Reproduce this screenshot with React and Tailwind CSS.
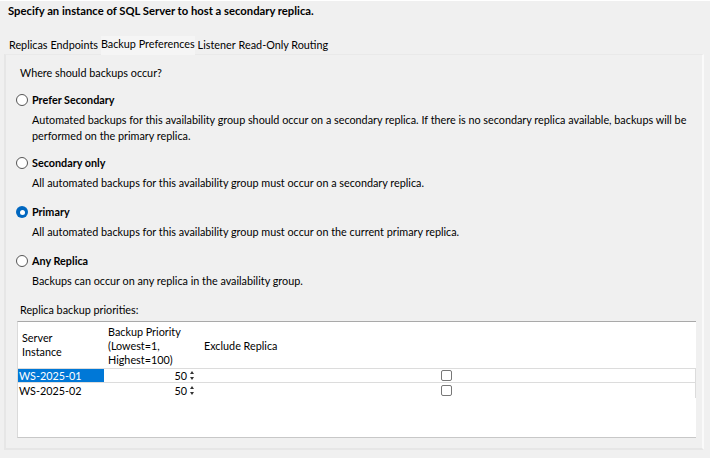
import React from 'react';

const font = "font-['Lato','Liberation_Sans',sans-serif]";

function Radio({ checked }) {
  if (checked) {
    return (
      <span className="flex h-[12px] w-[12px] shrink-0 items-center justify-center rounded-full bg-[#0067c0]">
        <span className="h-[5px] w-[5px] rounded-full bg-white" />
      </span>
    );
  }
  return <span className="h-[12px] w-[12px] shrink-0 rounded-full border border-[#555] bg-white" />;
}

function Option({ label, checked, children, className }) {
  return (
    <div className={className}>
      <div className="flex h-[16px] items-center gap-[4px] pl-[10px]">
        <Radio checked={checked} />
        <span className="font-bold">{label}</span>
      </div>
      <div className="mt-[4px] pl-[26px] leading-[16px]">{children}</div>
    </div>
  );
}

function Spinner() {
  return (
    <span className="ml-[3px] flex flex-col items-center gap-[3px]">
      <span className="h-0 w-0 border-x-[2.5px] border-b-[3px] border-x-transparent border-b-[#333]" />
      <span className="h-0 w-0 border-x-[2.5px] border-t-[3px] border-x-transparent border-t-[#333]" />
    </span>
  );
}

function Row({ name, selected, first }) {
  return (
    <div className={`flex h-[15px] items-center ${first ? 'border-y border-[#dcdcdc]' : ''}`}>
      <div className={`flex h-full w-[86px] items-center pl-[1px] ${selected ? 'bg-[#0078d7] text-white' : ''}`}>{name}</div>
      <div className="flex h-full w-[95px] items-center justify-end pr-[5px]">
        <span>50</span>
        <Spinner />
      </div>
      <div className="flex flex-1 justify-center pr-[2px]">
        <span className="h-[11px] w-[11px] rounded-[2px] border border-[#777] bg-white" />
      </div>
    </div>
  );
}

export default function App() {
  return (
    <div className={`h-[458px] w-[710px] overflow-hidden bg-[#f0f0f0] text-[10.8px] leading-[16px] text-black ${font}`}>
      <div className="border-t border-white pl-[8px] pt-[2px] text-[11.25px] font-bold">
        Specify an instance of SQL Server to host a secondary replica.
      </div>
      <div className="mt-[18px] flex h-[17px] items-end gap-[3px] pl-[9px]">
        <span className="pb-[1px]">Replicas</span>
        <span className="pb-[1px]">Endpoints</span>
        <span className="-mb-[1px] bg-[#f5f5f5] pb-[3px]">Backup Preferences</span>
        <span className="pb-[1px]">Listener</span>
        <span className="pb-[1px]">Read-Only Routing</span>
      </div>
      <div className="ml-[4px] flex h-[396px] w-[700px] flex-col border-x-2 border-b-2 border-[#e6e6e6] border-r-[#fafafa] border-t border-t-[#e9e9e9]">
        <div className="mt-[10px] pl-[14px]">Where should backups occur?</div>
        <Option className="mt-[11px]" label="Prefer Secondary">
          Automated backups for this availability group should occur on a secondary replica. If there is no secondary replica available, backups will be performed on the primary replica.
        </Option>
        <Option className="mt-[11px]" label="Secondary only">
          All automated backups for this availability group must occur on a secondary replica.
        </Option>
        <Option className="mt-[13px]" label="Primary" checked>
          All automated backups for this availability group must occur on the current primary replica.
        </Option>
        <Option className="mt-[13px]" label="Any Replica">
          Backups can occur on any replica in the availability group.
        </Option>
        <div className="mt-[13px] pl-[14px]">Replica backup priorities:</div>
        <div className="ml-[11px] mt-[3px] flex h-[117px] w-[679px] flex-col border-t border-[#a9a9a9] border-b border-b-[#c8c8c8] border-l border-l-[#dadada] bg-white leading-[14px]">
          <div className="flex h-[46px] shrink-0">
            <div className="flex w-[86px] flex-col pl-[4px] pt-[9px]">
              <span>Server</span>
              <span>Instance</span>
            </div>
            <div className="flex w-[95px] flex-col pl-[4px] pt-[3px]">
              <span>Backup Priority</span>
              <span>(Lowest=1,</span>
              <span>Highest=100)</span>
            </div>
            <div className="flex flex-1 items-center pl-[5px] pt-[1px]">Exclude Replica</div>
          </div>
          <div className="flex flex-col border-r border-[#dcdcdc]">
            <Row name="WS-2025-01" selected first />
            <Row name="WS-2025-02" />
          </div>
        </div>
      </div>
    </div>
  );
}
